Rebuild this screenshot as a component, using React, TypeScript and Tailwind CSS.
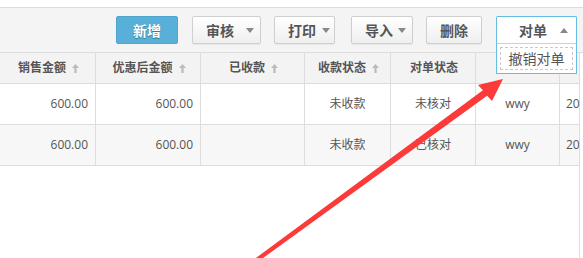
import React from "react";

const font = "font-['Open_Sans','Noto_Sans_CJK_SC',sans-serif]";

function Caret({ up = false }: { up?: boolean }) {
  return (
    <svg width="8" height="5" viewBox="0 0 8 5" className="shrink-0">
      {up ? <polygon points="0,5 8,5 4,0" fill="#888" /> : <polygon points="0,0 8,0 4,5" fill="#888" />}
    </svg>
  );
}

function SortArrow() {
  return (
    <svg width="7" height="9" viewBox="0 0 7 9" className="shrink-0">
      <polygon points="3.5,0 7,4 4.6,4 4.6,9 2.4,9 2.4,4 0,4" fill="#bbb" />
    </svg>
  );
}

const cols = [96, 105, 104, 86, 85, 84, 20];

function Cell({ w, children, align = "center", last = false, bg }: { w: number; children?: React.ReactNode; align?: "center" | "right" | "left"; last?: boolean; bg?: string }) {
  const a = align === "right" ? "justify-end pr-[7px]" : align === "left" ? "justify-start pl-[6px]" : "justify-center";
  return (
    <div
      style={{ width: w }}
      className={`flex shrink-0 items-center overflow-hidden whitespace-nowrap ${a} ${last ? "" : "border-r border-[#dedede]"}`}
    >
      {children}
    </div>
  );
}

export default function App() {
  const headers: { t: string; arrow: boolean }[] = [
    { t: "销售金额", arrow: true },
    { t: "优惠后金额", arrow: true },
    { t: "已收款", arrow: true },
    { t: "收款状态", arrow: true },
    { t: "对单状态", arrow: false },
    { t: "", arrow: true },
    { t: "", arrow: false },
  ];
  const rows = [
    { status: "未收款", check: "未核对", bg: "bg-white" },
    { status: "未收款", check: "已核对", bg: "bg-[#f7f7f7]" },
  ];
  const btn = "h-[28px] flex items-center rounded-[2px] border border-[#cfcfcf] bg-gradient-to-b from-white to-[#efefef] text-[14px] font-semibold text-[#555] shadow-[0_1px_1px_rgba(0,0,0,0.05)]";

  return (
    <div className={`relative h-[258px] w-[583px] overflow-hidden bg-white ${font}`}>
      <div className="h-[7px] bg-white" />
      {/* toolbar */}
      <div className="flex h-[46px] items-center border-y border-[#dcdcdc] bg-[#f4f4f4] pl-[116px]">
        <div className="flex h-[28px] w-[62px] items-center justify-center rounded-[2px] border border-[#4ea5cf] bg-[#58b0d8] text-[14px] font-bold text-white [text-shadow:0_1px_1px_rgba(0,0,0,0.35)]">
          新增
        </div>
        <div className={`${btn} ml-[14px] w-[69px] pl-[13px]`}>
          <span>审核</span>
          <span className="ml-[12px]"><Caret /></span>
        </div>
        <div className={`${btn} ml-[13px] w-[61px] pl-[13px]`}>
          <span>打印</span>
          <span className="ml-[6px]"><Caret /></span>
        </div>
        <div className={`${btn} ml-[16px] w-[62px] pl-[13px]`}>
          <span>导入</span>
          <span className="ml-[5px]"><Caret /></span>
        </div>
        <div className={`${btn} ml-[13px] w-[56px] justify-center`}>
          <span>删除</span>
        </div>
        <div className="relative z-10 ml-[14px] w-[81px]">
          <div className="flex h-[28px] items-center rounded-t-[2px] border border-[#66bde3] border-b-[#cfcfcf] bg-white pl-[22px] text-[14px] font-semibold text-[#555]">
            <span>对单</span>
            <span className="ml-[13px]"><Caret up /></span>
          </div>
          <div className="absolute left-0 right-0 top-full h-[30px] border border-t-0 border-[#66bde3] bg-white px-[3px] pt-[3px]">
            <div className="flex h-[23px] items-center justify-center border border-dashed border-[#c8c8c8] text-[14px] font-normal text-[#555]">
              撤销对单
            </div>
          </div>
        </div>
      </div>
      {/* table */}
      <div className="h-[205px] w-[580px] border-r border-[#dedede]">
        <div className="flex h-[31px] border-b border-[#dcdcdc] bg-[#f3f3f3] text-[12px] font-bold text-[#555]">
          {headers.map((h, i) => (
            <Cell key={i} w={cols[i]} last={i === cols.length - 1}>
              <span className="flex items-center gap-[6px] pl-[2px]">
                {h.t && <span>{h.t}</span>}
                {h.arrow && <SortArrow />}
              </span>
            </Cell>
          ))}
        </div>
        {rows.map((r, ri) => (
          <div key={ri} className={`flex h-[41px] border-b border-[#dcdcdc] text-[12px] text-[#555] ${r.bg}`}>
            <Cell w={cols[0]} align="right">600.00</Cell>
            <Cell w={cols[1]} align="right">600.00</Cell>
            <Cell w={cols[2]} />
            <Cell w={cols[3]}>{r.status}</Cell>
            <Cell w={cols[4]}>{r.check}</Cell>
            <Cell w={cols[5]}>wwy</Cell>
            <Cell w={cols[6]} align="left" last>2017</Cell>
          </div>
        ))}
      </div>
      {/* annotation arrow */}
      <svg className="pointer-events-none absolute left-0 top-0 z-20" width="583" height="258" viewBox="0 0 583 258">
        <polygon
          points="244,266.8 482.9,90.2 478,85 503,79 492,101 487.1,95.8 246.5,270"
          fill="#fb3a3a"
        />
      </svg>
    </div>
  );
}
